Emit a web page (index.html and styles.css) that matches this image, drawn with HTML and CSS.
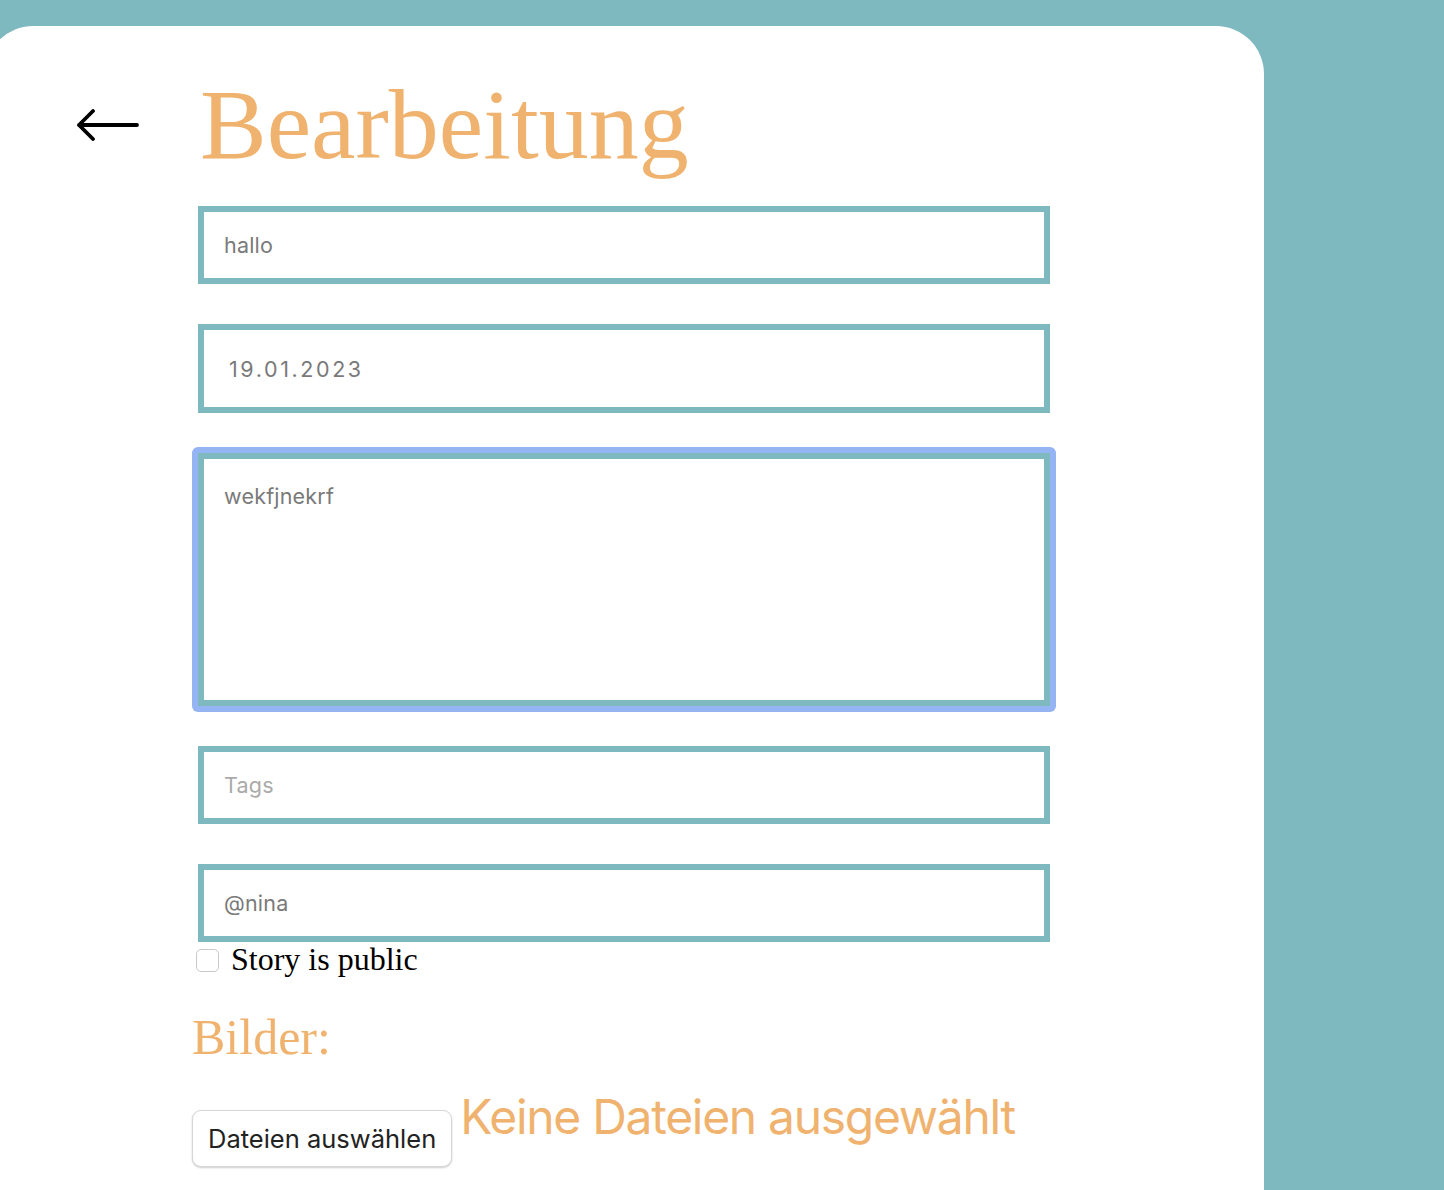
FILE: index.html
```html
<!DOCTYPE html>
<html lang="de">
<head>
    <meta charset="UTF-8">
    <meta name="viewport" content="width=device-width, initial-scale=1.0">
    <title>Bearbeitung</title>
    <link rel="stylesheet" href="styles.css">
</head>
<body>
    <div class="card">
        <header class="top">
            <a class="back" href="#">
                <svg width="64" height="32" viewBox="0 0 64 32">
                    <path d="M3 16 H61 M17 2 L3 16 L17 30" fill="none" stroke="#000" stroke-width="3.8" stroke-linecap="round" stroke-linejoin="round"/>
                </svg>
            </a>
            <h1 class="title">Bearbeitung</h1>
        </header>

        <form class="edit-form">
            <input class="field" type="text" value="hallo">
            <input class="field field-date" type="text" value="19.01.2023">
            <!-- textarea is shown in its focused state -->
            <div class="area-wrap">
                <textarea class="field field-area">wekfjnekrf</textarea>
            </div>
            <input class="field" type="text" placeholder="Tags">
            <input class="field field-last" type="text" value="@nina">

            <label class="public">
                <input class="check" type="checkbox">
                <span>Story is public</span>
            </label>

            <h2 class="pics-title">Bilder:</h2>

            <div class="upload">
                <button class="upload-btn" type="button">Dateien auswählen</button>
                <span class="upload-state">Keine Dateien ausgewählt</span>
            </div>
        </form>
    </div>
</body>
</html>
```

FILE: styles.css
```css
body {
    margin: 0;
    padding: 0;
    background-color: #7eb9c0;
    font-family: "Liberation Serif", "Times New Roman", serif;
    overflow: hidden;
}

.card {
    margin-top: 26px;
    margin-left: -15px;
    width: 1279px;
    min-height: 1200px;
    background: #fff;
    border-radius: 48px 48px 0 0;
}

.top {
    display: flex;
    align-items: center;
    padding: 49px 0 0 91px;
}

.back {
    display: block;
    width: 64px;
    height: 32px;
}

.back svg {
    display: block;
}

.title {
    margin: 0 0 0 60px;
    font-size: 100px;
    line-height: 0.99;
    font-weight: normal;
    color: #f0b36f;
}

.edit-form {
    display: flex;
    flex-direction: column;
    align-items: flex-start;
    margin-top: 32px;
    padding-left: 207px;
}

.field {
    box-sizing: border-box;
    width: 852px;
    height: 78px;
    margin: 0 0 40px 6px;
    padding: 0 20px;
    border: 6px solid #7eb9c0;
    border-radius: 0;
    background: #fff;
    font-family: Inter, "Noto Sans", sans-serif;
    font-size: 21.5px;
    letter-spacing: 0.2px;
    color: #7a7a7a;
    outline: none;
}

.field::placeholder {
    color: #aaa;
}

.field-date {
    height: 89px;
    padding-left: 25px;
    letter-spacing: 2.6px;
}

.field-last {
    margin-bottom: 0;
}

.area-wrap {
    padding: 6px;
    margin-bottom: 34px;
    background: #95b4f3;
    border-radius: 6px;
    margin-top: -6px;
}

.field-area {
    display: block;
    height: 253px;
    margin: 0;
    padding: 24px 20px;
    resize: none;
}

.public {
    display: flex;
    align-items: center;
    font-size: 32px;
    line-height: 34px;
    color: #000;
}

.check {
    appearance: none;
    -webkit-appearance: none;
    box-sizing: border-box;
    width: 23px;
    height: 23px;
    margin: 3px 12px 0 4px;
    border: 1px solid #c9c9c9;
    border-radius: 5px;
    background: #fff;
}

.pics-title {
    margin: 36px 0 0 0;
    font-size: 50px;
    line-height: 1;
    font-weight: normal;
    color: #f0b36f;
}

.upload {
    display: flex;
    align-items: flex-start;
    margin-top: 28px;
}

.upload-btn {
    margin-top: 20px;
    height: 57px;
    padding: 0 15px;
    border: 1px solid #d6d6d6;
    border-radius: 9px;
    background: #fff;
    box-shadow: 0 1px 2px rgba(0, 0, 0, 0.2);
    font-family: Inter, "Noto Sans", sans-serif;
    font-size: 25.5px;
    color: #222;
}

.upload-state {
    margin: 3px 0 0 8px;
    font-family: Inter, "Noto Sans", sans-serif;
    font-size: 48px;
    letter-spacing: -1.3px;
    line-height: 1;
    color: #f0b36f;
}
```
